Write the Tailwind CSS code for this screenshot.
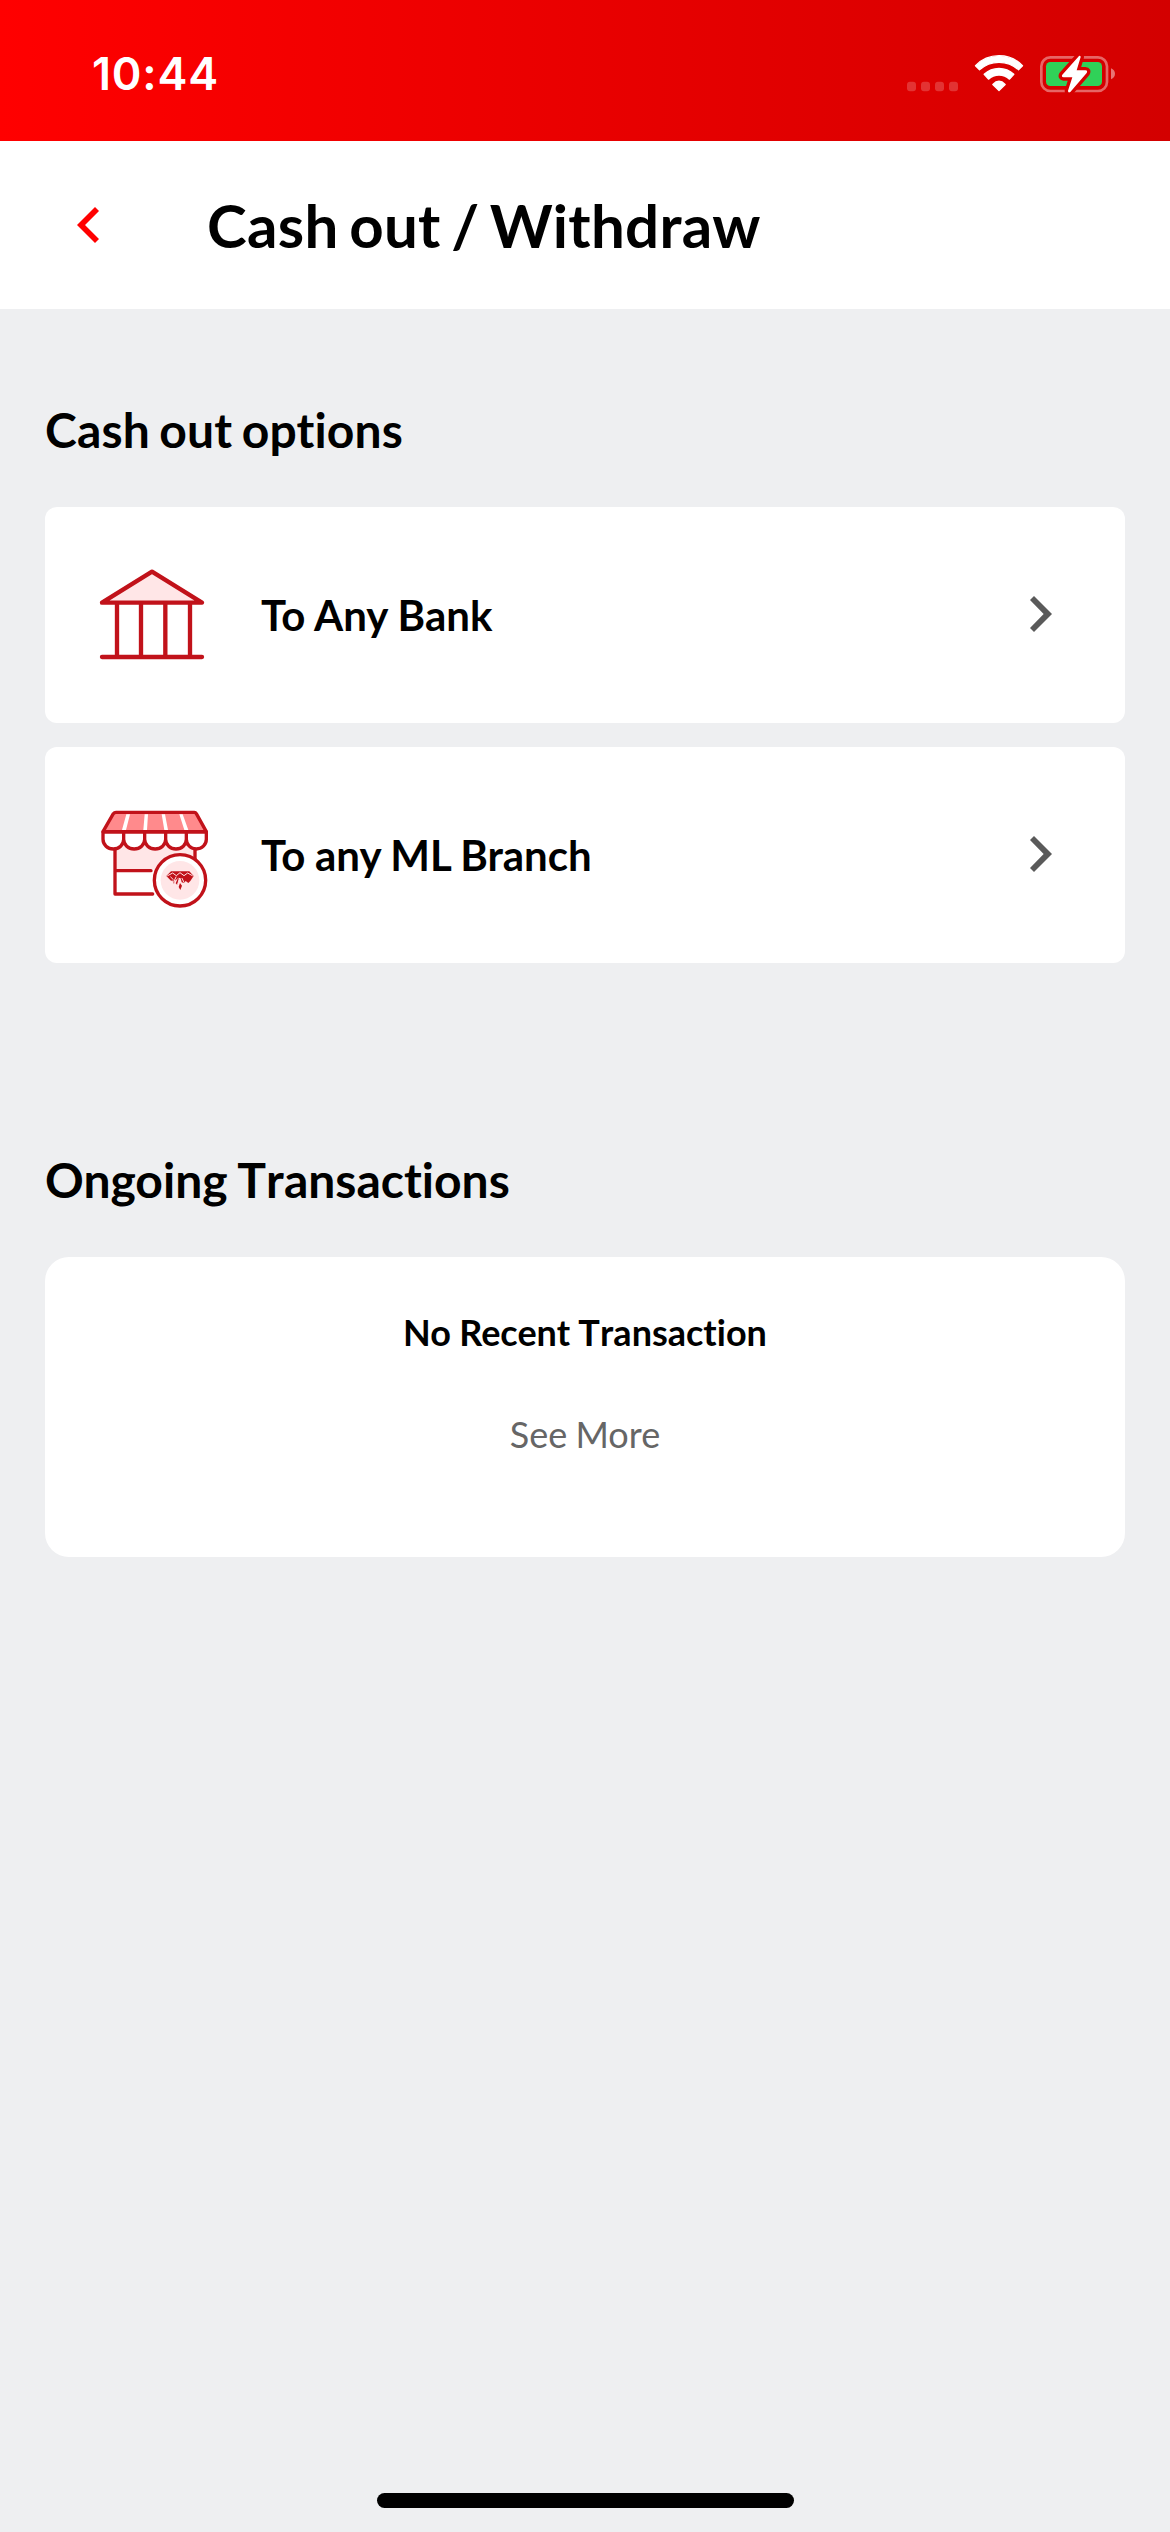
<!DOCTYPE html>
<html lang="en">
<head>
<meta charset="utf-8">
<title>Cash out / Withdraw</title>
<script src="https://cdn.jsdelivr.net/npm/@tailwindcss/browser@4"></script>
</head>
<body class="flex h-[2532px] w-[1170px] flex-col bg-[#eeeff1] font-['Lato',sans-serif] text-black [font-variant-ligatures:none]">
  <!-- Status bar -->
  <div class="flex h-[141px] shrink-0 items-start justify-between bg-linear-to-r from-[#ff0000] to-[#d30000] pr-[53px] pl-[92px]">
    <div class="mt-[46px] font-['Inter',sans-serif] text-[45px] leading-[56px] font-semibold tracking-[0.8px] text-white">10:44</div>
    <svg class="mt-[53px] h-10 w-[210px]" viewBox="81 69 630 120">
      <g fill="#fff" fill-opacity=".2">
        <rect x="81" y="155" width="27" height="29" rx="9"/><rect x="123" y="155" width="27" height="29" rx="9"/><rect x="165" y="155" width="27" height="29" rx="9"/><rect x="207" y="155" width="27" height="29" rx="9"/>
      </g>
      <g fill="#fff" stroke="#fff" stroke-width="4" stroke-linejoin="round">
        <path d="M286.500 107A98 98 0 0 1 427.500 107L415.500 119.500A87 87 0 0 0 298.500 119.500Z"/>
        <path d="M312.500 133A65 65 0 0 1 401.500 133L388.500 147.500A46 46 0 0 0 325.500 147.500Z"/>
        <path d="M338.500 163.500Q357 144 375.500 163.500L357 181.500Z"/>
      </g>
      <rect x="484" y="82" width="197" height="101" rx="27" fill="none" stroke="#fff" stroke-opacity=".4" stroke-width="8"/>
      <path d="M693 115Q705 120 705 131.500T693 148Z" fill="#fff" fill-opacity=".45"/>
      <rect x="498" y="96" width="168" height="72" rx="13" fill="#30d158"/>
      <path d="M597 78L547 134Q543 141 551 142H577L564 182Q564 190 571 186L620 129Q624 121 616 121H590L602 81Q601 75 597 78Z" fill="#fff" stroke="#d70000" stroke-width="20" stroke-linejoin="round" paint-order="stroke"/>
    </svg>
  </div>

  <!-- Title bar -->
  <header class="flex h-[168px] shrink-0 items-center bg-white pl-[77px]">
    <svg class="h-9 w-[22px]" viewBox="0 0 66 108"><path d="M54 0L0 54L54 108L66 96L24 54L66 12Z" fill="#f00"/></svg>
    <h1 class="ml-[108px] text-[60px] leading-[72px] font-bold tracking-[0.3px] [word-spacing:-4.3px]">Cash out / Withdraw</h1>
  </header>

  <main class="flex flex-col px-[45px]">
    <!-- Cash out options -->
    <h2 class="mt-[92px] text-[48px] leading-[58px] font-bold tracking-[0.15px] [word-spacing:-2.4px]">Cash out options</h2>
    <div class="mt-12 flex flex-col gap-6">
      <div class="flex h-[216px] items-center rounded-xl bg-white pr-[73px] pl-[47px]">
        <svg class="size-[120px]" viewBox="36 15 360 360" fill="none" stroke="#c1121a" stroke-width="13" stroke-linecap="round" stroke-linejoin="round">
          <path d="M66 158L216 65L366 158Z" fill="#ffe6e7"/>
          <path d="M66 321H366M111 160V320M183 160V320M256 160V320M330 160V320"/>
        </svg>
        <span class="ml-[49px] flex-1 text-[42px] leading-[50px] font-bold">To Any Bank</span>
        <svg class="mb-0.5 h-9 w-[22px]" viewBox="0 0 66 108"><path d="M12 0L66 54L12 108L0 96L41 54L0 12Z" fill="#5a5a5a"/></svg>
      </div>
      <div class="flex h-[216px] items-center rounded-xl bg-white pr-[73px] pl-[47px]">
        <svg class="size-[120px]" viewBox="6 0 360 360" fill="none" stroke="#c1121a" stroke-width="10" stroke-linecap="round" stroke-linejoin="round">
          <path d="M78 145H312V223H78Z" fill="#ffe6e7" stroke="none"/>
          <path d="M75 160V297H188M75 227H183M315 160V195"/>
          <path d="M78 52H313Q317 52 319 56L349 110H39L70 56Q73 52 78 52Z" fill="#ff8a8c"/>
          <path d="M109 58H120L108 105H96ZM164 58H174L171 105H160ZM215 58H225L234 105H223ZM268 58H278L295 105H283Z" fill="#fff" stroke="none"/>
          <path d="M39 111H101V133A31 29 0 0 1 39 133ZM101 111H164V133A31.500 29 0 0 1 101 133ZM164 111H227V133A31.500 29 0 0 1 164 133ZM227 111H289V133A31 29 0 0 1 227 133ZM289 111H349V133A30 29 0 0 1 289 133Z" fill="#fff"/>
          <circle cx="270" cy="256" r="77" fill="#fff"/>
          <circle cx="270" cy="256" r="58" fill="#ffe6e7" stroke="none"/>
          <path d="M243 229H298L311 243L301 258L295 264L287 258L282 264L275 262L272 250L264 248L257 256L243 257L229 243ZM264 248L268 252L262 270L257 265ZM270 264L276 272L271 285L266 276ZM248 258L254 254L252 267Z" fill="#c1121a" stroke="none"/>
          <path d="M233 242L248 234L259 242L270 233L282 242L293 234L307 242M242 246L250 254M258 246L251 261M268 250L263 268M276 250L282 262" stroke="#ffe6e7" stroke-width="3"/>
        </svg>
        <span class="ml-[49px] flex-1 text-[42px] leading-[50px] font-bold [word-spacing:-0.5px]">To any ML Branch</span>
        <svg class="mb-0.5 h-9 w-[22px]" viewBox="0 0 66 108"><path d="M12 0L66 54L12 108L0 96L41 54L0 12Z" fill="#5a5a5a"/></svg>
      </div>
    </div>

    <!-- Ongoing transactions -->
    <h2 class="mt-[188px] text-[48px] leading-[58px] font-bold [word-spacing:-2px]">Ongoing <span class="[font-kerning:none]">Transactions</span></h2>
    <div class="mt-12 flex h-[300px] flex-col items-center rounded-3xl bg-white pt-[53px]">
      <p class="text-[36px] leading-[44px] font-bold [word-spacing:-0.5px]">No Recent <span class="[font-kerning:none]">Transaction</span></p>
      <p class="mt-[58px] text-[36px] leading-[44px] text-[#666] [word-spacing:-1px]">See More</p>
    </div>
  </main>

  <!-- Home indicator -->
  <div class="mx-auto mt-auto mb-6 h-[15px] w-[417px] shrink-0 rounded-full bg-black"></div>
</body>
</html>
